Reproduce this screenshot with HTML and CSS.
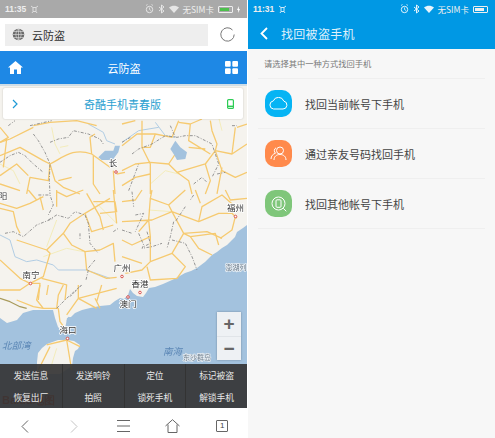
FILE: index.html
```html
<!DOCTYPE html>
<html>
<head>
<meta charset="UTF-8">
<title>云防盗</title>
<link rel="stylesheet" href="styles.css">
</head>
<body>
<div class="screens">

  <!-- left: browser with map -->
  <div class="phone">
    <div class="status status-gray">
      <span class="time">11:35</span>
      <svg width="9" height="9" viewBox="0 0 9 9"><path d="M1 1l2 1.500h3L8 1M2 8l1-1.500h3L7 8M3 2.500v4M6 2.500v4" fill="none" stroke="#ddd" stroke-width="1"/></svg>
      <span class="grow"></span>
      <svg width="9" height="10" viewBox="0 0 9 10"><circle cx="4.500" cy="5.500" r="3.200" fill="none" stroke="#e6e6e6"/><path d="M1 1.500l1.500-1M8 1.500l-1.500-1M4.500 3.500v2l1.500 1" fill="none" stroke="#e6e6e6" stroke-width=".8"/></svg>
      <svg width="7" height="10" viewBox="0 0 7 10"><path d="M1 3l5 4-2.500 2V1L6 3 1 7" fill="none" stroke="#e6e6e6"/></svg>
      <svg width="10" height="8" viewBox="0 0 10 8"><path d="M0 2.500C3 0 7 0 10 2.500L5 8z" fill="#e6e6e6"/></svg>
      <span class="carrier">无SIM卡</span>
      <span class="battery"><span class="level level-green"></span></span>
      <svg width="3" height="7" viewBox="0 0 3 7"><path d="M2 0L0 4h1.200L1 7l2-4H1.800z" fill="#fff"/></svg>
    </div>

    <div class="address">
      <div class="url-box">
        <svg width="13" height="13" viewBox="0 0 13 13"><circle cx="6.500" cy="6.500" r="5.800" fill="#6b6b6b"/><path d="M.7 6.500h11.600M1.500 3.500h10M1.500 9.500h10M6.500.7v11.600M6.500.7C3 4 3 9 6.500 12.300M6.500.7C10 4 10 9 6.500 12.300" fill="none" stroke="#e4e4e4" stroke-width=".6"/></svg>
        <span>云防盗</span>
      </div>
      <svg class="reload" width="15" height="15" viewBox="0 0 15 15"><path d="M12.500 3A6.700 6.700 0 1 0 14.200 7.500" fill="none" stroke="#777" stroke-width="1"/></svg>
    </div>

    <div class="site-head">
      <svg width="15" height="13" viewBox="0 0 15 13"><path d="M7.500 0L0 6.500h2V13h4V8.500h3V13h4V6.500h2z" fill="#fff"/></svg>
      <span>云防盗</span>
      <svg width="13" height="13" viewBox="0 0 13 13"><g fill="#fff"><rect width="5.700" height="5.700" rx="1"/><rect x="7.300" width="5.700" height="5.700" rx="1"/><rect y="7.300" width="5.700" height="5.700" rx="1"/><rect x="7.300" y="7.300" width="5.700" height="5.700" rx="1"/></g></svg>
    </div>

    <div class="map">
      <svg class="map-art" viewBox="0 84 247 324" preserveAspectRatio="none">
        <rect x="0" y="84" width="247" height="324" fill="#f5f3ee"/>
        <path d="M0 84H247V86H0z" fill="#cfdde6"/>
        <!-- sea -->
        <path d="M247 225L243 228 237 232 235 237 232 240 227 245 222 248 217 252 212 255 205 262 197 268 191 271 185 273 178 277 172 280 163 284 155 287 149 288 146 293 143 297 137 296 133 293 130 289 128 295 124 299 120 298 115 301 110 305 100 306 90 308 82 310 75 313 71 317 67 318 66 324 65 328 60 329 58 327 55 318 53 310 43 310 33 310 23 313 17 320 7 323 0 318V408H247z" fill="#a3c2de"/>
        <!-- hainan -->
        <path d="M67 340L74 341 80 345 78 349 75 351 73 358 72 366 60 374H37L37 362 38 353 42 348 47 344 58 340z" fill="#f5f3ee"/>

        <!-- north west -->
        <g transform="translate(0 84) scale(.3333)">
          <path class="river" d="M265 120L310 145 320 170 345 180"/>
          <path class="minor" d="M155 130L165 180 180 210M180 190L205 185M0 240L40 260 60 300"/>
          <path class="road" d="M150 240C190 220 220 190 275 210L330 250M275 210L270 160 285 150M0 175L30 165 100 130M100 125L150 115 230 110 290 125M0 215L60 190 130 230 150 240 165 290 190 310 240 330"/>
          <path class="road" d="M150 240L145 290 90 280 80 330M0 275L50 240 85 275M175 290L215 280M280 215L280 300 300 330M340 260L345 330M350 270L375 265M0 300L60 320M0 130L25 160 0 175M20 165L10 250"/>
          <path class="border" d="M100 150L115 170 135 205 150 240 148 290 150 330M150 175L175 165 205 160 220 140 265 150 300 165 310 180M0 235L30 215 55 205 75 215 100 240 130 265M25 125L45 110M90 125L155 110"/>
          <path class="lake" d="M295 220L315 200 340 200 345 185 360 185 355 205 340 225 325 228 305 228z"/>
        </g>

        <!-- north east -->
        <g transform="translate(122 84) scale(.3333)">
          <path class="river" d="M0 175L50 140 110 130M100 115L130 155 160 160"/>
          <path class="minor" d="M85 300L130 260 170 270M290 100L300 140"/>
          <path class="road" d="M0 185L45 150 100 150 150 160 170 110M60 110L60 190 85 240 85 330M0 260L40 240 85 235 140 240 160 210M140 240L165 265 250 240 280 200 330 210 375 180M165 265L200 290 210 330"/>
          <path class="road" d="M170 115L205 120 240 105M205 120L200 170 265 210M265 110L270 140 285 180 280 200 300 260 340 280 375 265M300 250L285 330M0 305L40 280 85 270M345 130L375 120M200 190L250 195M250 240L265 290 250 330M100 150L85 190 60 190M0 120L40 110M330 210L340 130"/>
          <path class="border" d="M0 175L25 160M30 210L50 195 90 180 130 155 165 160 190 155 220 155 270 180 290 240 270 280M145 125L160 160M215 300L240 280 255 295M285 270L310 265M330 125L345 125M20 320L50 240"/>
          <path class="lake" d="M145 195L160 170 175 190 195 205 190 225 165 228 155 210z"/>
        </g>

        <!-- south west -->
        <g transform="translate(0 190) scale(.3333)">
          <path class="river" d="M0 135L30 150 45 200 80 215 110 210 160 225 175 240 260 240 330 265"/>
          <path class="minor" d="M170 90L140 170M130 200L200 175 250 185M290 40L350 100"/>
          <path class="road" d="M0 55L40 65 50 110 60 130M0 40L50 55 90 40 130 20M85 0L110 30M130 60L120 20M170 0L170 50M170 5L200 20 250 0M140 180L190 130 210 100 255 70 330 25M190 130L215 165 255 185 300 180"/>
          <path class="road" d="M0 210L60 265 90 280 130 260 150 190 140 180 50 150M90 280L120 280 115 330M125 265L200 285 195 330M255 70L275 125 340 105M260 10L300 80 310 120M255 185L260 240 320 265 350 262M0 300L60 300 90 280M300 180L340 160 345 215M340 0L350 100M280 35L345 35 350 65 300 70"/>
          <path class="border" d="M115 15L150 15 160 45 145 75M145 90L170 75 205 85 225 65 255 75 265 100 270 160 295 190M15 130L40 125 70 140 110 105 160 85M240 130L240 150M285 210L260 240M265 240L258 270M245 285L210 320M340 125L355 115"/>
        </g>

        <!-- south east -->
        <g transform="translate(122 190) scale(.3333)">
          <path class="minor" d="M80 60L150 65"/>
          <path class="road" d="M0 35L40 30 60 0M90 0L85 25 140 45 190 0M85 25L80 90 50 125M0 95L90 90 150 65 230 95 290 70 330 70 345 85M140 45L150 65 185 130 255 125 300 145M80 90L85 140 85 215 60 240 10 250"/>
          <path class="road" d="M85 215L150 190 185 130M150 190L190 230 165 265 85 270 75 230M205 140L230 175 270 195M185 130L205 140 280 130 290 165M230 95L240 50 300 15 340 50M310 0L325 30 375 25M340 80L330 120 295 145M0 150L30 165 85 140M0 200L60 220M220 0L235 40"/>
          <path class="border" d="M30 5L35 50M40 75L65 70 40 125M0 120L30 130M50 130L65 165 60 175 90 170 120 160M155 95L145 140 135 175M150 150L190 160 210 200 225 240M190 50L160 95M215 15L205 30M75 125L85 160 65 170"/>
        </g>

        <!-- south coast and hainan -->
        <g transform="translate(0 285) scale(.3333)">
          <path class="road" d="M50 45L100 65 130 70 175 70M120 0L110 45 130 70M145 0L140 30M190 0L175 30 170 70M175 70L180 110 195 130M200 90L235 40 290 70M235 0L235 40 350 10M285 40L300 70M305 0L290 50"/>
          <path class="road" d="M140 180L200 165 240 185M200 165L215 255M150 185L115 255"/>
          <path class="minor" d="M170 190L150 255"/>
          <path class="border" d="M170 70L200 40 245 0"/>
          <path class="province" d="M0 40L30 50 60 65 80 70"/>
          <path class="lake" d="M205 95L218 100 212 110 200 108z"/>
        </g>

        <g class="dots">
          <circle cx="116" cy="172" r="1.300"/><circle cx="235.500" cy="216.500" r="1.300"/><circle cx="122" cy="276.500" r="1.300"/><circle cx="30.500" cy="283.500" r="1.300"/><circle cx="140" cy="292.500" r="1.300"/><circle cx="128" cy="297" r="1.300"/><circle cx="67.500" cy="338.500" r="1.300"/>
        </g>
        <g class="city">
          <text x="113" y="166" text-anchor="middle">长</text>
          <text x="235.500" y="211" text-anchor="middle">福州</text>
          <text x="122" y="271" text-anchor="middle">广州</text>
          <text x="31" y="278" text-anchor="middle">南宁</text>
          <text x="140" y="287" text-anchor="middle">香港</text>
          <text x="128" y="307" text-anchor="middle">澳门</text>
          <text x="68" y="333" text-anchor="middle">海口</text>
          <text x="3" y="199" text-anchor="middle">阳</text>
        </g>
        <text class="sea-name" x="225.500" y="270">澎湖列</text>
        <text class="water" x="2" y="349">北部湾</text>
        <text class="water" x="163" y="355">南海</text>
        <text class="sea-name" x="183" y="360">东沙群岛</text>
        <text class="logo" x="2" y="404">Baidu地图</text>
      </svg>

      <div class="model-card">
        <svg width="6" height="10" viewBox="0 0 6 10"><path d="M1 1l4 4-4 4" fill="none" stroke="#1e9ad6" stroke-width="1.200"/></svg>
        <span>奇酷手机青春版</span>
        <svg width="7" height="10" viewBox="0 0 7 10"><rect x=".6" y=".6" width="5.800" height="8.800" rx="1" fill="none" stroke="#2ecc55" stroke-width="1.200"/><path d="M.6 7.300h5.800" stroke="#2ecc55" stroke-width="1.400"/></svg>
      </div>

      <div class="zoom-ctl">
        <div class="zoom-btn">+</div>
        <div class="zoom-btn">−</div>
      </div>

      <div class="actions">
        <div>发送信息</div><div>发送响铃</div><div>定位</div><div>标记被盗</div>
        <div>恢复出厂</div><div>拍照</div><div>锁死手机</div><div>解锁手机</div>
      </div>
    </div>

    <div class="nav">
      <svg width="8" height="13" viewBox="0 0 8 13"><path d="M7 .5L1 6.500l6 6" fill="none" stroke="#666" stroke-width="1"/></svg>
      <svg width="8" height="13" viewBox="0 0 8 13"><path d="M1 .5l6 6-6 6" fill="none" stroke="#c4c4c4" stroke-width="1"/></svg>
      <svg width="13" height="12" viewBox="0 0 13 12"><path d="M0 .5h13M0 6h13M0 11.500h13" fill="none" stroke="#666" stroke-width="1"/></svg>
      <svg width="15" height="14" viewBox="0 0 15 14"><path d="M.5 7L7.500.7 14.500 7M3 5.500v8h9v-8" fill="none" stroke="#666" stroke-width="1"/></svg>
      <div class="tabs">1</div>
    </div>
  </div>

  <!-- right: recover stolen phone -->
  <div class="phone phone-light">
    <div class="status status-blue">
      <span class="time">11:31</span>
      <svg width="9" height="9" viewBox="0 0 9 9"><path d="M1 1l2 1.500h3L8 1M2 8l1-1.500h3L7 8M3 2.500v4M6 2.500v4" fill="none" stroke="#cfe9f8" stroke-width="1"/></svg>
      <span class="grow"></span>
      <svg width="9" height="10" viewBox="0 0 9 10"><circle cx="4.500" cy="5.500" r="3.200" fill="none" stroke="#e6f4fc"/><path d="M1 1.500l1.500-1M8 1.500l-1.500-1M4.500 3.500v2l1.500 1" fill="none" stroke="#e6f4fc" stroke-width=".8"/></svg>
      <svg width="7" height="10" viewBox="0 0 7 10"><path d="M1 3l5 4-2.500 2V1L6 3 1 7" fill="none" stroke="#e6f4fc"/></svg>
      <svg width="10" height="8" viewBox="0 0 10 8"><path d="M0 2.500C3 0 7 0 10 2.500L5 8z" fill="#e6f4fc"/></svg>
      <span class="carrier">无SIM卡</span>
      <span class="battery"><span class="level"></span></span>
    </div>
    <div class="title-bar">
      <svg width="8" height="13" viewBox="0 0 8 13"><path d="M7 1L1.500 6.500 7 12" fill="none" stroke="#fff" stroke-width="1.800"/></svg>
      <span>找回被盗手机</span>
    </div>
    <p class="hint">请选择其中一种方式找回手机</p>
    <ul class="ways">
      <li>
        <span class="way-icon way-blue">
          <svg width="19" height="13" viewBox="0 0 19 13"><path d="M4.500 12H14a4 4 0 0 0 .8-7.900A5.600 5.600 0 0 0 4.300 3.900 4.100 4.100 0 0 0 4.500 12z" fill="none" stroke="#fff" stroke-width="1"/></svg>
        </span>
        找回当前帐号下手机
      </li>
      <li>
        <span class="way-icon way-orange">
          <svg width="17" height="15" viewBox="0 0 17 15"><circle cx="10" cy="4.500" r="3.500" fill="none" stroke="#fff"/><path d="M4 14c0-3.500 2.500-5.500 6-5.500s6 2 6 5.500M6 1.800a3.300 3.300 0 0 0-.5 5.400C3 8 1 10 1 13" fill="none" stroke="#fff"/></svg>
        </span>
        通过亲友号码找回手机
      </li>
      <li>
        <span class="way-icon way-green">
          <svg width="16" height="16" viewBox="0 0 16 16"><circle cx="7.500" cy="7.500" r="6.500" fill="none" stroke="#fff"/><rect x="5" y="3.800" width="5" height="7.500" rx="1" fill="none" stroke="#fff"/><path d="M12.300 12.300l3 3" stroke="#fff"/></svg>
        </span>
        找回其他帐号下手机
      </li>
    </ul>
  </div>

</div>
</body>
</html>
```

FILE: styles.css
```css
* {
  margin: 0;
  padding: 0;
  box-sizing: border-box;
}

body {
  background-color: #fff;
  font-family: "Noto Sans CJK SC", "Liberation Sans", sans-serif;
}

.screens {
  display: flex;
  gap: 1px;
  width: 495px;
  height: 438px;
  overflow: hidden;
}

.phone {
  display: flex;
  flex-direction: column;
  width: 247px;
  height: 438px;
}

.phone-light {
  background-color: #f7f7f7;
}

/* status bars */
.status {
  display: flex;
  align-items: center;
  gap: 4px;
  height: 18px;
  padding: 0 7px 0 5px;
  color: #eee;
  font-size: 8.500px;
  flex-shrink: 0;
}

.status-gray {
  background-color: #a9a9a9;
}

.status-blue {
  background-color: #0098e4;
}

.time {
  font-family: "Liberation Sans", sans-serif;
  font-size: 8.500px;
  font-weight: bold;
}

.grow {
  flex: 1;
}

.carrier {
  white-space: nowrap;
}

.battery {
  display: block;
  width: 15px;
  height: 7px;
  padding: 1px;
  border: 1px solid #eee;
  border-radius: 1px;
}

.level {
  display: block;
  width: 9px;
  height: 3px;
  background-color: #eee;
}

.level-green {
  background-color: #4cc04c;
}

/* browser address bar */
.address {
  display: flex;
  align-items: center;
  justify-content: space-between;
  height: 33px;
  padding: 0 12px 0 5px;
  background-color: #fff;
  flex-shrink: 0;
}

.url-box {
  display: flex;
  align-items: center;
  gap: 7px;
  width: 203px;
  height: 22px;
  padding-left: 7px;
  background-color: #eee;
  font-size: 11px;
  color: #333;
}

.site-head {
  display: flex;
  align-items: center;
  justify-content: space-between;
  height: 33px;
  padding: 0 9px 0 8px;
  background-color: #1e88e5;
  color: #fff;
  font-size: 11px;
  flex-shrink: 0;
}

/* map */
.map {
  position: relative;
  flex: 1;
  overflow: hidden;
}

.map-art {
  display: block;
  width: 247px;
  height: 324px;
  filter: blur(.3px);
}

.road,
.minor,
.river,
.border,
.province {
  fill: none;
  vector-effect: non-scaling-stroke;
  stroke-linejoin: round;
}

.road {
  stroke: #f6ca70;
  stroke-width: 1.300;
}

.minor {
  stroke: #f3ebb4;
  stroke-width: .9;
}

.river {
  stroke: #a9c8e2;
  stroke-width: .9;
}

.lake {
  fill: #a3c2de;
}

.border {
  stroke: #8a8a8a;
  stroke-width: .9;
  stroke-dasharray: 3 1.500 1 1.500;
}

.province {
  stroke: #a89a5a;
  stroke-width: 1.200;
}

.dots {
  fill: #fff;
  stroke: #d9534f;
  stroke-width: 1;
}

.city {
  font-size: 8.500px;
  fill: #333;
  stroke: #fff;
  stroke-width: 1.500px;
  paint-order: stroke;
}

.water {
  font-size: 9.500px;
  font-style: italic;
  fill: #5a86b5;
}

.sea-name {
  font-size: 7px;
  fill: #6f7f8e;
  stroke: #e8eef3;
  stroke-width: 1.500px;
  paint-order: stroke;
}

.logo {
  font-family: "Liberation Sans", sans-serif;
  font-size: 11px;
  font-weight: bold;
  fill: #c0392b;
}

.model-card {
  position: absolute;
  top: 4px;
  left: 3px;
  display: flex;
  align-items: center;
  justify-content: space-between;
  width: 240px;
  height: 31px;
  padding: 0 9px 0 9px;
  background-color: #fff;
  border-radius: 2px;
  box-shadow: 0 0 2px rgba(0, 0, 0, .2);
  color: #2a9fd0;
  font-size: 11px;
}

.zoom-ctl {
  position: absolute;
  top: 228px;
  left: 217px;
  width: 24px;
  background-color: #eef1f4;
  box-shadow: 0 0 2px rgba(0, 0, 0, .3);
}

.zoom-btn {
  height: 24px;
  text-align: center;
  font-family: "Liberation Sans", sans-serif;
  font-size: 19px;
  font-weight: bold;
  line-height: 23px;
  color: #666;
}

.zoom-btn + .zoom-btn {
  border-top: 1px solid #e0e4e8;
}

.actions {
  position: absolute;
  left: 0;
  right: 0;
  bottom: 0;
  display: grid;
  grid-template-columns: repeat(4, 1fr);
  grid-template-rows: 22px 22px;
  height: 44px;
  background-color: rgba(52, 52, 52, .92);
  color: #e8e8e8;
  font-size: 8.750px;
}

.actions div {
  display: flex;
  align-items: center;
  justify-content: center;
  border-left: 1px solid #333;
}

.actions div:nth-child(4n+1) {
  border-left: none;
}

/* browser toolbar */
.nav {
  display: grid;
  grid-template-columns: repeat(5, 1fr);
  align-items: center;
  justify-items: center;
  height: 30px;
  padding-top: 6px;
  background-color: #fff;
  flex-shrink: 0;
}

.tabs {
  width: 12px;
  height: 12px;
  border: 1px solid #666;
  border-radius: 1px;
  text-align: center;
  font-family: "Liberation Sans", sans-serif;
  font-size: 8px;
  line-height: 10px;
  color: #444;
}

/* recover page */
.title-bar {
  display: flex;
  align-items: center;
  gap: 13px;
  height: 31px;
  padding: 0 12px;
  background-color: #0098e4;
  color: #dff1fb;
  font-size: 12px;
  letter-spacing: .3px;
  flex-shrink: 0;
}

.hint {
  height: 29px;
  padding-left: 16px;
  font-size: 8.250px;
  line-height: 29px;
  color: #777;
}

.ways {
  margin: 0 10px;
  list-style-type: none;
  border-top: 1px solid #efefef;
}

.ways li {
  display: flex;
  align-items: center;
  gap: 13px;
  height: 50px;
  padding-left: 7px;
  border-bottom: 1px solid #efefef;
  font-size: 11px;
  color: #444;
}

.way-icon {
  display: flex;
  align-items: center;
  justify-content: center;
  width: 27px;
  height: 27px;
  border-radius: 10px;
}

.way-blue {
  background-color: #06b4f4;
}

.way-orange {
  background-color: #ff8a4c;
}

.way-green {
  background-color: #7fc67a;
}
```
